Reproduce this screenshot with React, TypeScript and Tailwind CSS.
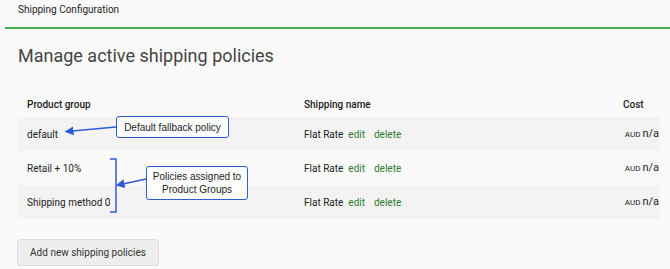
import React from "react";

type Policy = {
  group: string;
  name: string;
  currency: string;
  cost: string;
};

const policies: Policy[] = [
  { group: "default", name: "Flat Rate", currency: "AUD", cost: "n/a" },
  { group: "Retail + 10%", name: "Flat Rate", currency: "AUD", cost: "n/a" },
  { group: "Shipping method 0", name: "Flat Rate", currency: "AUD", cost: "n/a" },
];

function Callout({ className, children }: { className: string; children: React.ReactNode }) {
  return (
    <div
      className={`absolute bg-white border-[1.5px] border-[#2f5bd3] rounded-[3px] text-[10px] leading-[13px] text-[#222] text-center flex items-center justify-center ${className}`}
      style={{ fontFamily: '"Liberation Sans", Arial, sans-serif' }}
    >
      {children}
    </div>
  );
}

export default function App() {
  return (
    <div
      className="w-[670px] h-[269px] bg-[#fafafa] text-[#222] overflow-hidden"
      style={{ fontFamily: "Roboto, Arial, sans-serif" }}
    >
      <div className="h-[27px] pl-[18px] pt-[3px] text-[10px] leading-[13px] text-[#222]">
        Shipping Configuration
      </div>
      <div className="ml-[5px] h-[2px] bg-[#4caf50]" />

      <h1 className="pl-[18px] pt-[15px] text-[18px] leading-[24px] text-[#444] font-normal">
        Manage active shipping policies
      </h1>

      <div className="relative mt-[23px] ml-[17px] w-[643px]">
        <div className="grid grid-cols-[277px_319px_1fr] h-[26px] pt-[7px] leading-[13px] text-[10px] font-medium text-[#222]">
          <div className="pl-[10px]">Product group</div>
          <div className="pl-[10px]">Shipping name</div>
          <div className="pl-[10px]">Cost</div>
        </div>

        {policies.map((p, i) => (
          <div
            key={p.group}
            className={`grid grid-cols-[277px_319px_1fr] h-[34px] items-center text-[10px] text-[#222] ${
              i % 2 === 0 ? "bg-[#f3f3f3]" : "bg-[#fafafa]"
            }`}
          >
            <div className="pl-[10px]">{p.group}</div>
            <div className="pl-[10px] flex gap-[5px]">
              <span>{p.name}</span>
              <span className="text-[#2e7d32]">edit</span>
              <span className="ml-[4px] text-[#2e7d32]">delete</span>
            </div>
            <div className="pr-[1px] text-right">
              <span className="text-[8px] mr-[2px]">{p.currency}</span>
              <span className="text-[11px]">{p.cost}</span>
            </div>
          </div>
        ))}

        {/* annotations */}
        <svg className="absolute left-0 top-0 pointer-events-none" width="260" height="140" viewBox="0 0 260 140">
          <defs>
            <marker id="ah" markerWidth="6" markerHeight="6" refX="1" refY="3" orient="auto-start-reverse">
              <path d="M0,0 L6,3 L0,6 z" fill="#2f5bd3" />
            </marker>
          </defs>
          <line x1="99" y1="36" x2="55" y2="40" stroke="#2f5bd3" strokeWidth="1.5" markerEnd="url(#ah)" />
          <path d="M93,68 L99,68 L99,121 L93,121" fill="none" stroke="#2f5bd3" strokeWidth="1.5" />
          <line x1="129" y1="88" x2="106" y2="93" stroke="#2f5bd3" strokeWidth="1.5" markerEnd="url(#ah)" />
        </svg>
        <Callout className="left-[99px] top-[25px] w-[113px] h-[22px]">Default fallback policy</Callout>
        <Callout className="left-[129px] top-[75px] w-[102px] h-[34px]">
          Policies assigned to
          <br />
          Product Groups
        </Callout>
      </div>

      <button className="block mt-[20px] ml-[17px] w-[142px] h-[27px] bg-[#eeeeee] border border-[#dddddd] rounded-[3px] text-[10px] text-[#333]">
        Add new shipping policies
      </button>
    </div>
  );
}
